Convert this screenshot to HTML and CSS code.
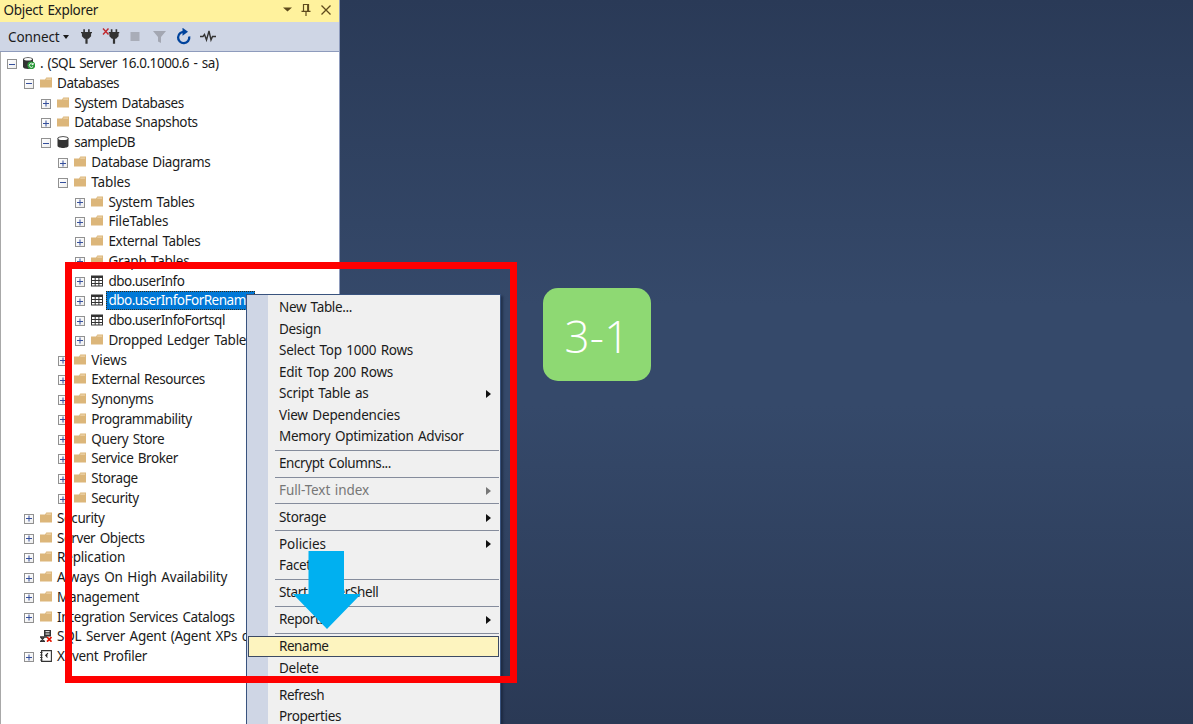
FILE: index.html
```html
<!DOCTYPE html>
<html lang="en">
<head>
<meta charset="utf-8">
<title>Object Explorer</title>
<link rel="stylesheet" href="styles.css">
</head>
<body>
<svg class="defs" width="0" height="0">
  <symbol id="folder" viewBox="0 0 12 12"><path d="M0 2.500h5l1.300-2H12v10H0z" fill="#dcb67a"/><path d="M6.300 2.100h4.800" stroke="#f6e6c8" stroke-width=".8"/></symbol>
  <symbol id="table" viewBox="0 0 12 12"><path d="M0 .5h12v11H0z" fill="#333"/><path d="M1 3h2.700v2H1zM4.700 3h2.700v2H4.700zM8.400 3H11v2H8.400zM1 6h2.700v2H1zM4.700 6h2.700v2H4.700zM8.400 6H11v2H8.400zM1 9h2.700v1.600H1zM4.700 9h2.700v1.600H4.700zM8.400 9H11v1.600H8.400z" fill="#fff"/></symbol>
  <symbol id="db" viewBox="0 0 12 12"><path d="M.5 2.300C.5-.6 11.500-.6 11.500 2.300v7.500c0 2.900-11 2.900-11 0z" fill="#333"/><ellipse cx="6" cy="2.500" rx="4.700" ry="1.500" fill="#fff"/></symbol>
  <symbol id="server" viewBox="0 0 12 12"><path d="M0 2.300C0-.6 10-.6 10 2.300v7.400c0 2.900-10 2.900-10 0z" fill="#333"/><ellipse cx="5" cy="2.300" rx="4" ry="1.300" fill="#fff"/><circle cx="8.300" cy="8.300" r="3.900" fill="#2b9a3b"/><path d="M10 7.200A2 2 0 1 0 10 9.500M10.200 6v1.600H8.600" fill="none" stroke="#fff" stroke-width=".9"/></symbol>
  <symbol id="agent" viewBox="0 0 12 12"><path d="M4 0h7v6.500H4z" fill="#333"/><path d="M5.500 1.700h4M5.500 4h4" stroke="#fff"/><path d="M0 7h5M0 11.500h5M1 7.500l3 3.500M4 7.500L1 11M5 7h2" stroke="#333" stroke-width="1.300"/><path d="M7 7l4.500 4.700M11.500 7L7 11.700" stroke="#e51400" stroke-width="1.700"/></symbol>
  <symbol id="profiler" viewBox="0 0 12 12"><path d="M1.600.6h9.800v10.800H1.600z" fill="#fff" stroke="#333" stroke-width="1.100"/><path d="M0 2.500h2.500M0 5h2.500M0 7.500h2.500M0 10h2.500" stroke="#333" stroke-width=".9"/><path d="M8 3.200L5.700 5.300 7.500 7.500M6 5.300h1.500" fill="none" stroke="#222" stroke-width="1.100"/></symbol>
  <symbol id="plug" viewBox="0 0 12 16"><path d="M2.500 0h1.800v3h3.400V0h1.800v3H12v1.500h-1v3.200L8.300 10.500H7.200V16H4.800v-5.500H3.700L1 7.700V4.500H0V3h2.500z" fill="#333"/></symbol>
</svg>
<main class="desktop">
  <section class="explorer">
    <header class="titlebar">
      <span class="title" data-width="94.500">Object Explorer</span>
      <svg class="title-icons" width="50" height="16" viewBox="0 0 50 16" fill="none" stroke="#5f4b1d"><path d="M0 5.500h9L4.500 9.500z" fill="#5f4b1d" stroke="none"/><path d="M20.500 9V2.500h5V9M18.500 9.300h9M23 9.500V14M24.700 3v6" stroke-width="1.200"/><path d="M38.500 3.500l9 9M47.500 3.500l-9 9" stroke-width="1.300"/></svg>
    </header>
    <div class="toolbar">
      <span class="connect" data-width="51.500">Connect</span>
      <i class="caret"></i>
      <svg class="tools" width="136" height="18" viewBox="0 0 136 18">
        <use href="#plug" x="0" y="1" width="11" height="15"/>
        <path d="M22 .5l5.500 6M27.500.5l-5.500 6" stroke="#c1272d" stroke-width="1.400"/><use href="#plug" x="27.500" y="1" width="11" height="15"/>
        <path d="M49.500 4h9v9h-9z" fill="#a9adb8"/>
        <path d="M72 3h13l-5 6v6l-3-1.500V9z" fill="#a3a7b2"/>
        <path d="M103.600 4A5.600 5.600 0 1 0 108.200 8.500" fill="none" stroke="#00439c" stroke-width="2.300"/><path d="M101.500-.3l5.500 4-5.500 4z" fill="#00439c"/>
        <path d="M119 8.500h3l1.500-2 2 5.500 2.500-9 2 9 1.500-3.500H135" fill="none" stroke="#333" stroke-width="1.400"/>
      </svg>
    </div>
    <div class="tree" id="tree"></div>
  </section>

  <nav class="menu" id="menu"></nav>
  <div class="highlight"></div>
  <svg class="arrow" width="68" height="78" viewBox="0 0 68 78"><path d="M15.500 0h35.500v43h17L34 78 0 43h15.500z" fill="#00b0f0"/></svg>
  <div class="step"><span data-width="65">3-1</span></div>
</main>
<script src="app.js"></script>
</body>
</html>
```
FILE: styles.css
```css
* { box-sizing: border-box; }
body {
  margin: 0;
  height: 724px;
  overflow: hidden;
  font: 13.5px/19px "Noto Sans", "Open Sans", sans-serif;
  word-spacing: 1.300px;
  color: #1b1b1b;
}
.defs { position: absolute; }
.desktop {
  position: relative;
  height: 724px;
  overflow: hidden;
  background: linear-gradient(#2a3a57 0, #35496a 42%, #35496a 56%, #2a3955 100%);
}
.explorer {
  display: flex;
  flex-direction: column;
  width: 340px;
  height: 724px;
  background: #fff;
  border-right: 1px solid #8e9bbc;
}
.titlebar {
  display: flex;
  align-items: center;
  justify-content: space-between;
  height: 22px;
  padding: 0 6px 2px 3.500px;
  background: #fff29d;
  white-space: nowrap;
}
.toolbar {
  display: flex;
  align-items: center;
  height: 30px;
  padding-left: 8px;
  background: #cfd6e5;
  border-bottom: 1px solid #8e9bbc;
}
.connect { padding-top: 1px; }
.caret, .sub {
  width: 0;
  height: 0;
  border: 3.500px solid transparent;
}
.caret {
  margin: 0 12px 0 3px;
  border-top: 4px solid #1b1b1b;
  border-bottom: 0;
}
.tree {
  flex: 1;
  padding-top: 1.800px;
  border-left: 1px solid #a8a8a8;
  overflow: hidden;
}
.node {
  display: flex;
  align-items: center;
  height: 19.770px;
  white-space: nowrap;
}
.box {
  position: relative;
  flex: none;
  width: 10px;
  height: 10px;
  margin: 1px 6px 0 0;
  border: 1px solid #919191;
  background: linear-gradient(135deg, #fff, #eee);
}
.box::before, .box.plus::after {
  content: "";
  position: absolute;
  left: 1px;
  top: 3.500px;
  width: 6px;
  height: 1px;
  background: #354f9c;
}
.box.plus::after { transform: rotate(90deg); }
.box.none { visibility: hidden; }
.icon {
  flex: none;
  width: 12px;
  height: 12px;
  margin: 0 3px 1px 0;
}
.label { padding: 0 2px; line-height: 19px; }
.selected {
  background: #0078d7;
  color: #fff;
  outline: 1px dotted #3a2a10;
  outline-offset: -1px;
}
.menu {
  position: absolute;
  left: 246px;
  top: 294px;
  width: 255px;
  height: 440px;
  padding-top: 1.900px;
  border: 1px solid #39537e;
  background: linear-gradient(90deg, #cfd6e5 21px, #f0f0f0 21px);
  box-shadow: 2px 2px 2px rgba(15, 25, 45, .5);
}
.item {
  display: flex;
  align-items: center;
  justify-content: space-between;
  height: 21.560px;
  margin: 0 1px;
  padding: 0 7px 0 31px;
  white-space: nowrap;
}
.item.disabled { color: #777; }
.item.active {
  background: #fdf4bf;
  border: 1px solid #3c4a64;
  padding: 0 6px 0 30px;
}
.sub {
  border-width: 4px 0 4px 5px;
  border-left-color: #111;
  margin-right: 1px;
}
.disabled .sub { border-left-color: #777; }
.sep {
  height: 5.340px;
  margin: 0 1px 0 28px;
  padding-top: 2px;
}
.sep::before { content: ""; display: block; height: 1px; background: #858c9c; }
.highlight {
  position: absolute;
  left: 65px;
  top: 262px;
  width: 452px;
  height: 421px;
  border: 7px solid #f00;
}
.arrow { position: absolute; left: 292.500px; top: 551px; }
.step {
  position: absolute;
  left: 543px;
  top: 288px;
  width: 108px;
  height: 93px;
  display: flex;
  align-items: center;
  justify-content: center;
  padding-top: 2px;
  border-radius: 15px;
  background: #8ed973;
  color: #fff;
  font: 350 44px/60px "Open Sans", "Noto Sans", sans-serif;
}
```
FILE: app.js
```js
// depth, state (+ collapsed, - expanded), icon, label, label width in px
const nodes = [
  [0, '-', 'server', '. (SQL Server 16.0.1000.6 - sa)', 178.500],
  [1, '-', 'folder', 'Databases', 62],
  [2, '+', 'folder', 'System Databases', 109.500],
  [2, '+', 'folder', 'Database Snapshots', 123.500],
  [2, '-', 'db', 'sampleDB', 61],
  [3, '+', 'folder', 'Database Diagrams', 119],
  [3, '-', 'folder', 'Tables', 39],
  [4, '+', 'folder', 'System Tables', 86],
  [4, '+', 'folder', 'FileTables', 60],
  [4, '+', 'folder', 'External Tables', 92],
  [4, '+', 'folder', 'Graph Tables', 81],
  [4, '+', 'table', 'dbo.userInfo', 76],
  [4, '+', 'table', 'dbo.userInfoForRename', 144.500, 'selected'],
  [4, '+', 'table', 'dbo.userInfoFortsql', 116.500],
  [4, '+', 'folder', 'Dropped Ledger Tables', 144],
  [3, '+', 'folder', 'Views', 35.500],
  [3, '+', 'folder', 'External Resources', 113.500],
  [3, '+', 'folder', 'Synonyms', 62],
  [3, '+', 'folder', 'Programmability', 100.500],
  [3, '+', 'folder', 'Query Store', 73],
  [3, '+', 'folder', 'Service Broker', 86.500],
  [3, '+', 'folder', 'Storage', 46.500],
  [3, '+', 'folder', 'Security', 47.500],
  [1, '+', 'folder', 'Security', 47.500],
  [1, '+', 'folder', 'Server Objects', 87.500],
  [1, '+', 'folder', 'Replication', 68],
  [1, '+', 'folder', 'Always On High Availability', 170],
  [1, '+', 'folder', 'Management', 82],
  [1, '+', 'folder', 'Integration Services Catalogs', 177.500],
  [1, '', 'agent', 'SQL Server Agent (Agent XPs disabled)', 240],
  [1, '+', 'profiler', 'XEvent Profiler', 90],
];
// label, label width in px, flags: s submenu, d disabled, a active; null is a separator
const items = [
  ['New Table...', 73, ''], ['Design', 42, ''], ['Select Top 1000 Rows', 134, ''],
  ['Edit Top 200 Rows', 114, ''], ['Script Table as', 89.500, 's'],
  ['View Dependencies', 121, ''], ['Memory Optimization Advisor', 184.500, ''], null,
  ['Encrypt Columns...', 112, ''], null, ['Full-Text index', 90, 'sd'], null,
  ['Storage', 47, 's'], null, ['Policies', 47, 's'], ['Facets', 38, ''], null,
  ['Start PowerShell', 99.500, ''], null, ['Reports', 46.500, 's'], null,
  ['Rename', 49.500, 'a'], ['Delete', 39.500, ''], null,
  ['Refresh', 45, ''], ['Properties', 62, ''],
];
document.getElementById('tree').innerHTML = nodes.map(([depth, state, icon, text, width, cls = '']) =>
  `<div class="node" style="padding-left:${6 + depth * 17.1}px">
    <i class="box ${state === '+' ? 'plus' : state ? '' : 'none'}"></i>
    <svg class="icon"><use href="#${icon}"/></svg>
    <span class="label ${cls}" data-width="${width}">${text}</span></div>`).join('');
document.getElementById('menu').innerHTML = items.map(item => {
  if (!item) return '<div class="sep"></div>';
  const [text, width, flags] = item;
  const cls = (flags.includes('d') ? ' disabled' : '') + (flags.includes('a') ? ' active' : '');
  return `<div class="item${cls}"><span data-width="${width}">${text}</span>${flags.includes('s') ? '<i class="sub"></i>' : ''}</div>`;
}).join('');
// Spread each label to its width
document.querySelectorAll('[data-width]').forEach(el => {
  const range = document.createRange();
  range.selectNodeContents(el);
  const natural = range.getBoundingClientRect().width;
  el.style.letterSpacing = (el.dataset.width - natural) / el.textContent.length + 'px';
});
```
